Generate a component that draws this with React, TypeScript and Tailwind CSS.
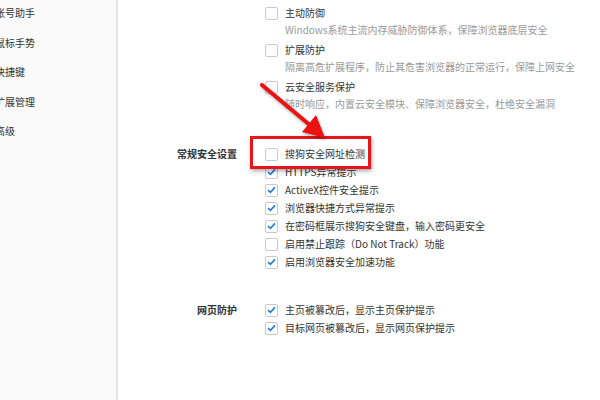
import React from 'react';

interface Option {
  label: string;
  checked: boolean;
}

const sideItems = ['账号助手', '鼠标手势', '快捷键', '扩展管理', '高级'];

const protections = [
  { title: '主动防御', desc: 'Windows系统主流内存威胁防御体系，保障浏览器底层安全' },
  { title: '扩展防护', desc: '隔离高危扩展程序，防止其危害浏览器的正常运行，保障上网安全' },
  { title: '云安全服务保护', desc: '随时响应，内置云安全模块、保障浏览器安全，杜绝安全漏洞' },
];

const general: Option[] = [
  { label: '搜狗安全网址检测', checked: false },
  { label: 'HTTPS异常提示', checked: true },
  { label: 'ActiveX控件安全提示', checked: true },
  { label: '浏览器快捷方式异常提示', checked: true },
  { label: '在密码框展示搜狗安全键盘，输入密码更安全', checked: true },
  { label: '启用禁止跟踪（Do Not Track）功能', checked: false },
  { label: '启用浏览器安全加速功能', checked: true },
];

const pageGuard: Option[] = [
  { label: '主页被篡改后，显示主页保护提示', checked: true },
  { label: '目标网页被篡改后，显示网页保护提示', checked: true },
];

const Checkbox: React.FC<{ checked: boolean }> = ({ checked }) => (
  <span className="w-[13px] h-[13px] shrink-0 border border-[#c9c9c9] rounded-[2px] bg-white flex items-center justify-center">
    {checked && (
      <svg width="9" height="8" viewBox="0 0 9 8">
        <path d="M1 4.2 L3.4 6.4 L8 1.4" fill="none" stroke="#1f7fe0" strokeWidth="1.6" />
      </svg>
    )}
  </span>
);

const OptionRow: React.FC<{ option: Option }> = ({ option }) => (
  <div className="flex items-center gap-[7px] h-[18px]">
    <Checkbox checked={option.checked} />
    <span className="text-[#333]">{option.label}</span>
  </div>
);

const Section: React.FC<{ title: string; options: Option[] }> = ({ title, options }) => (
  <div className="flex">
    <div className="w-[119px] h-[18px] leading-[18px] text-right font-bold text-[#333]">{title}</div>
    <div className="ml-[28px] flex flex-col">
      {options.map((o) => (
        <OptionRow key={o.label} option={o} />
      ))}
    </div>
  </div>
);

export default function App() {
  return (
    <div className="relative w-[600px] h-[400px] flex bg-white overflow-hidden text-[10px] leading-[18px] font-['Noto_Sans_CJK_SC','Noto_Sans',sans-serif]">
      <aside className="w-[118px] shrink-0 bg-[#fafafa] border-r-2 border-[#e4e4e4] overflow-hidden">
        <ul className="flex flex-col gap-[11.5px] pt-[4px] -ml-[5px]">
          {sideItems.map((s) => (
            <li key={s} className="text-[#333] h-[18px] whitespace-nowrap">
              {s}
            </li>
          ))}
        </ul>
      </aside>

      <main className="flex-1 pt-[4px]">
        <div className="ml-[147px] flex flex-col gap-[3px]">
          {protections.map((p) => (
            <div key={p.title} className="flex flex-col">
              <div className="flex items-center gap-[7px] h-[18px]">
                <Checkbox checked={false} />
                <span className="text-[#333]">{p.title}</span>
              </div>
              <div className="pl-[20px] h-[16px] leading-[16px] text-[#9a9a9a] whitespace-nowrap">{p.desc}</div>
            </div>
          ))}
        </div>

        <div className="mt-[33px]">
          <Section title="常规安全设置" options={general} />
        </div>

        <div className="mt-[30px]">
          <Section title="网页防护" options={pageGuard} />
        </div>
      </main>

      <div className="absolute left-[250px] top-[136px] w-[121px] h-[33px] border-[3px] border-[#e8161b] shadow-[1px_2px_4px_rgba(0,0,0,0.35)] pointer-events-none" />

      <svg className="absolute left-0 top-0 pointer-events-none" width="600" height="400" viewBox="0 0 600 400">
        <g style={{ filter: 'drop-shadow(1px 2px 1.5px rgba(0,0,0,0.3))' }}>
          <line x1="262" y1="85" x2="311" y2="126" stroke="#ee1111" strokeWidth="4" strokeLinecap="round" />
          <polygon points="325,138 302,132 316,115" fill="#ee1111" />
        </g>
      </svg>
    </div>
  );
}
